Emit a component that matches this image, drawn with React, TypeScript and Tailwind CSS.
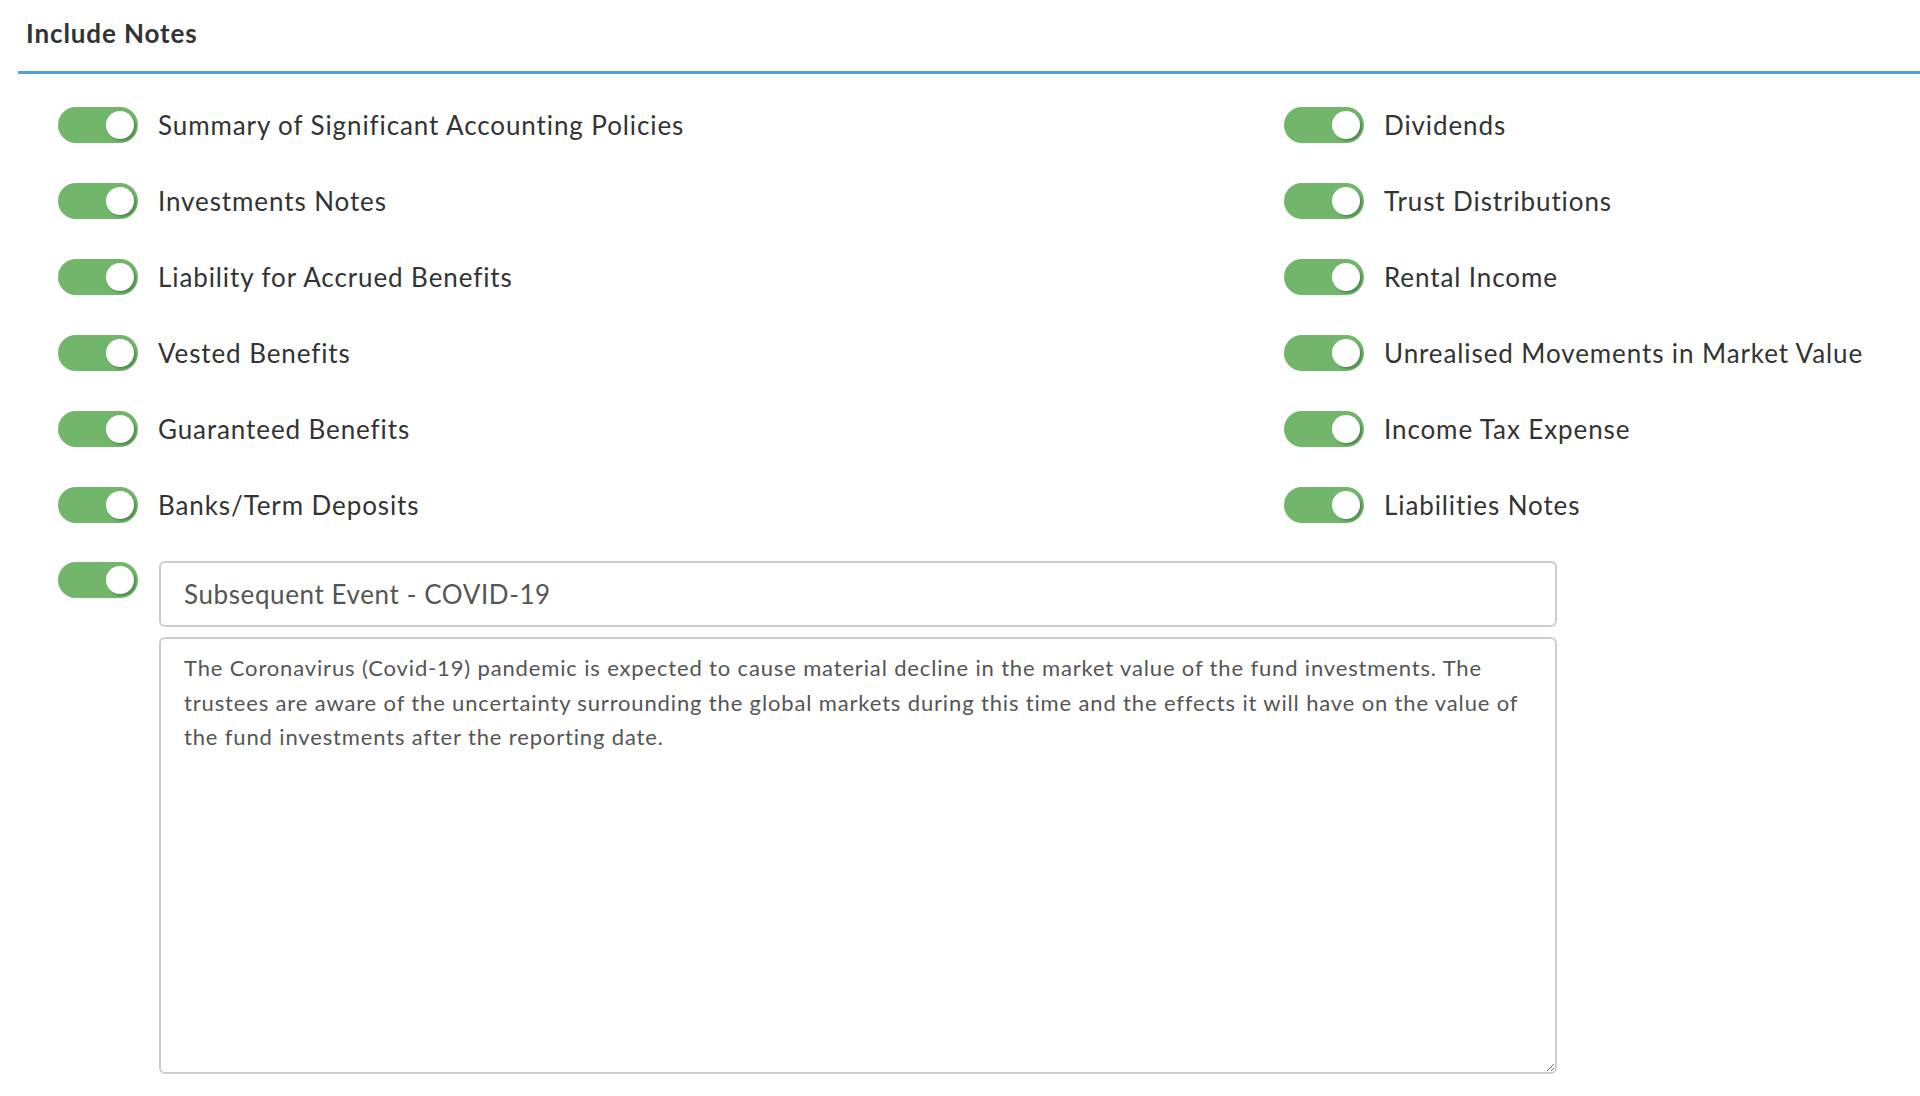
import React from "react";

const left = [
  "Summary of Significant Accounting Policies",
  "Investments Notes",
  "Liability for Accrued Benefits",
  "Vested Benefits",
  "Guaranteed Benefits",
  "Banks/Term Deposits",
];
const right = [
  "Dividends",
  "Trust Distributions",
  "Rental Income",
  "Unrealised Movements in Market Value",
  "Income Tax Expense",
  "Liabilities Notes",
];

function Toggle() {
  return (
    <div className="relative w-[80px] h-[36px] shrink-0 rounded-full bg-[#72b66b]">
      <div className="absolute top-[4px] right-[4px] w-[28px] h-[28px] rounded-full bg-white shadow-[2px_2px_2px_rgba(40,90,40,0.45)]" />
    </div>
  );
}

function Item({ label }: { label: string }) {
  return (
    <div className="flex items-center gap-[20px] h-[36px]">
      <Toggle />
      <span className="text-[26px] leading-[30px] tracking-[0.9px] text-[#333333] whitespace-nowrap">{label}</span>
    </div>
  );
}

const body =
  "The Coronavirus (Covid-19) pandemic is expected to cause material decline in the market value of the fund investments. The\ntrustees are aware of the uncertainty surrounding the global markets during this time and the effects it will have on the value of\nthe fund investments after the reporting date.";

export default function App() {
  return (
    <div className="w-full h-[1096px] overflow-hidden bg-white font-['Lato',sans-serif]">
      <div className="ml-[18px] h-[74px] border-b-[3px] border-[#4fa3d3] pl-[8px] pt-[18px]">
        <h2 className="text-[26px] leading-[30px] font-bold tracking-[0.9px] text-[#333333]">Include Notes</h2>
      </div>
      <div className="pl-[58px] pt-[33px]">
        <div className="grid grid-cols-[1226px_1fr] gap-y-[40px]">
          {left.map((l, i) => (
            <React.Fragment key={l}>
              <Item label={l} />
              <Item label={right[i]} />
            </React.Fragment>
          ))}
        </div>
        <div className="flex gap-[21px] mt-[38px]">
          <div className="pt-[1px]">
            <Toggle />
          </div>
          <div className="flex flex-col gap-[10px] w-[1398px]">
            <div className="h-[66px] rounded-[6px] border-2 border-[#cccccc] flex items-center px-[23px] text-[26px] tracking-[0.6px] text-[#555555]">
              Subsequent Event - COVID-19
            </div>
            <textarea
              readOnly
              value={body}
              className="h-[437px] w-full rounded-[6px] border-2 border-[#cccccc] px-[23px] pt-[12px] text-[22px] leading-[34.5px] tracking-[0.85px] text-[#555555] outline-none resize-y"
            />
          </div>
        </div>
      </div>
    </div>
  );
}
